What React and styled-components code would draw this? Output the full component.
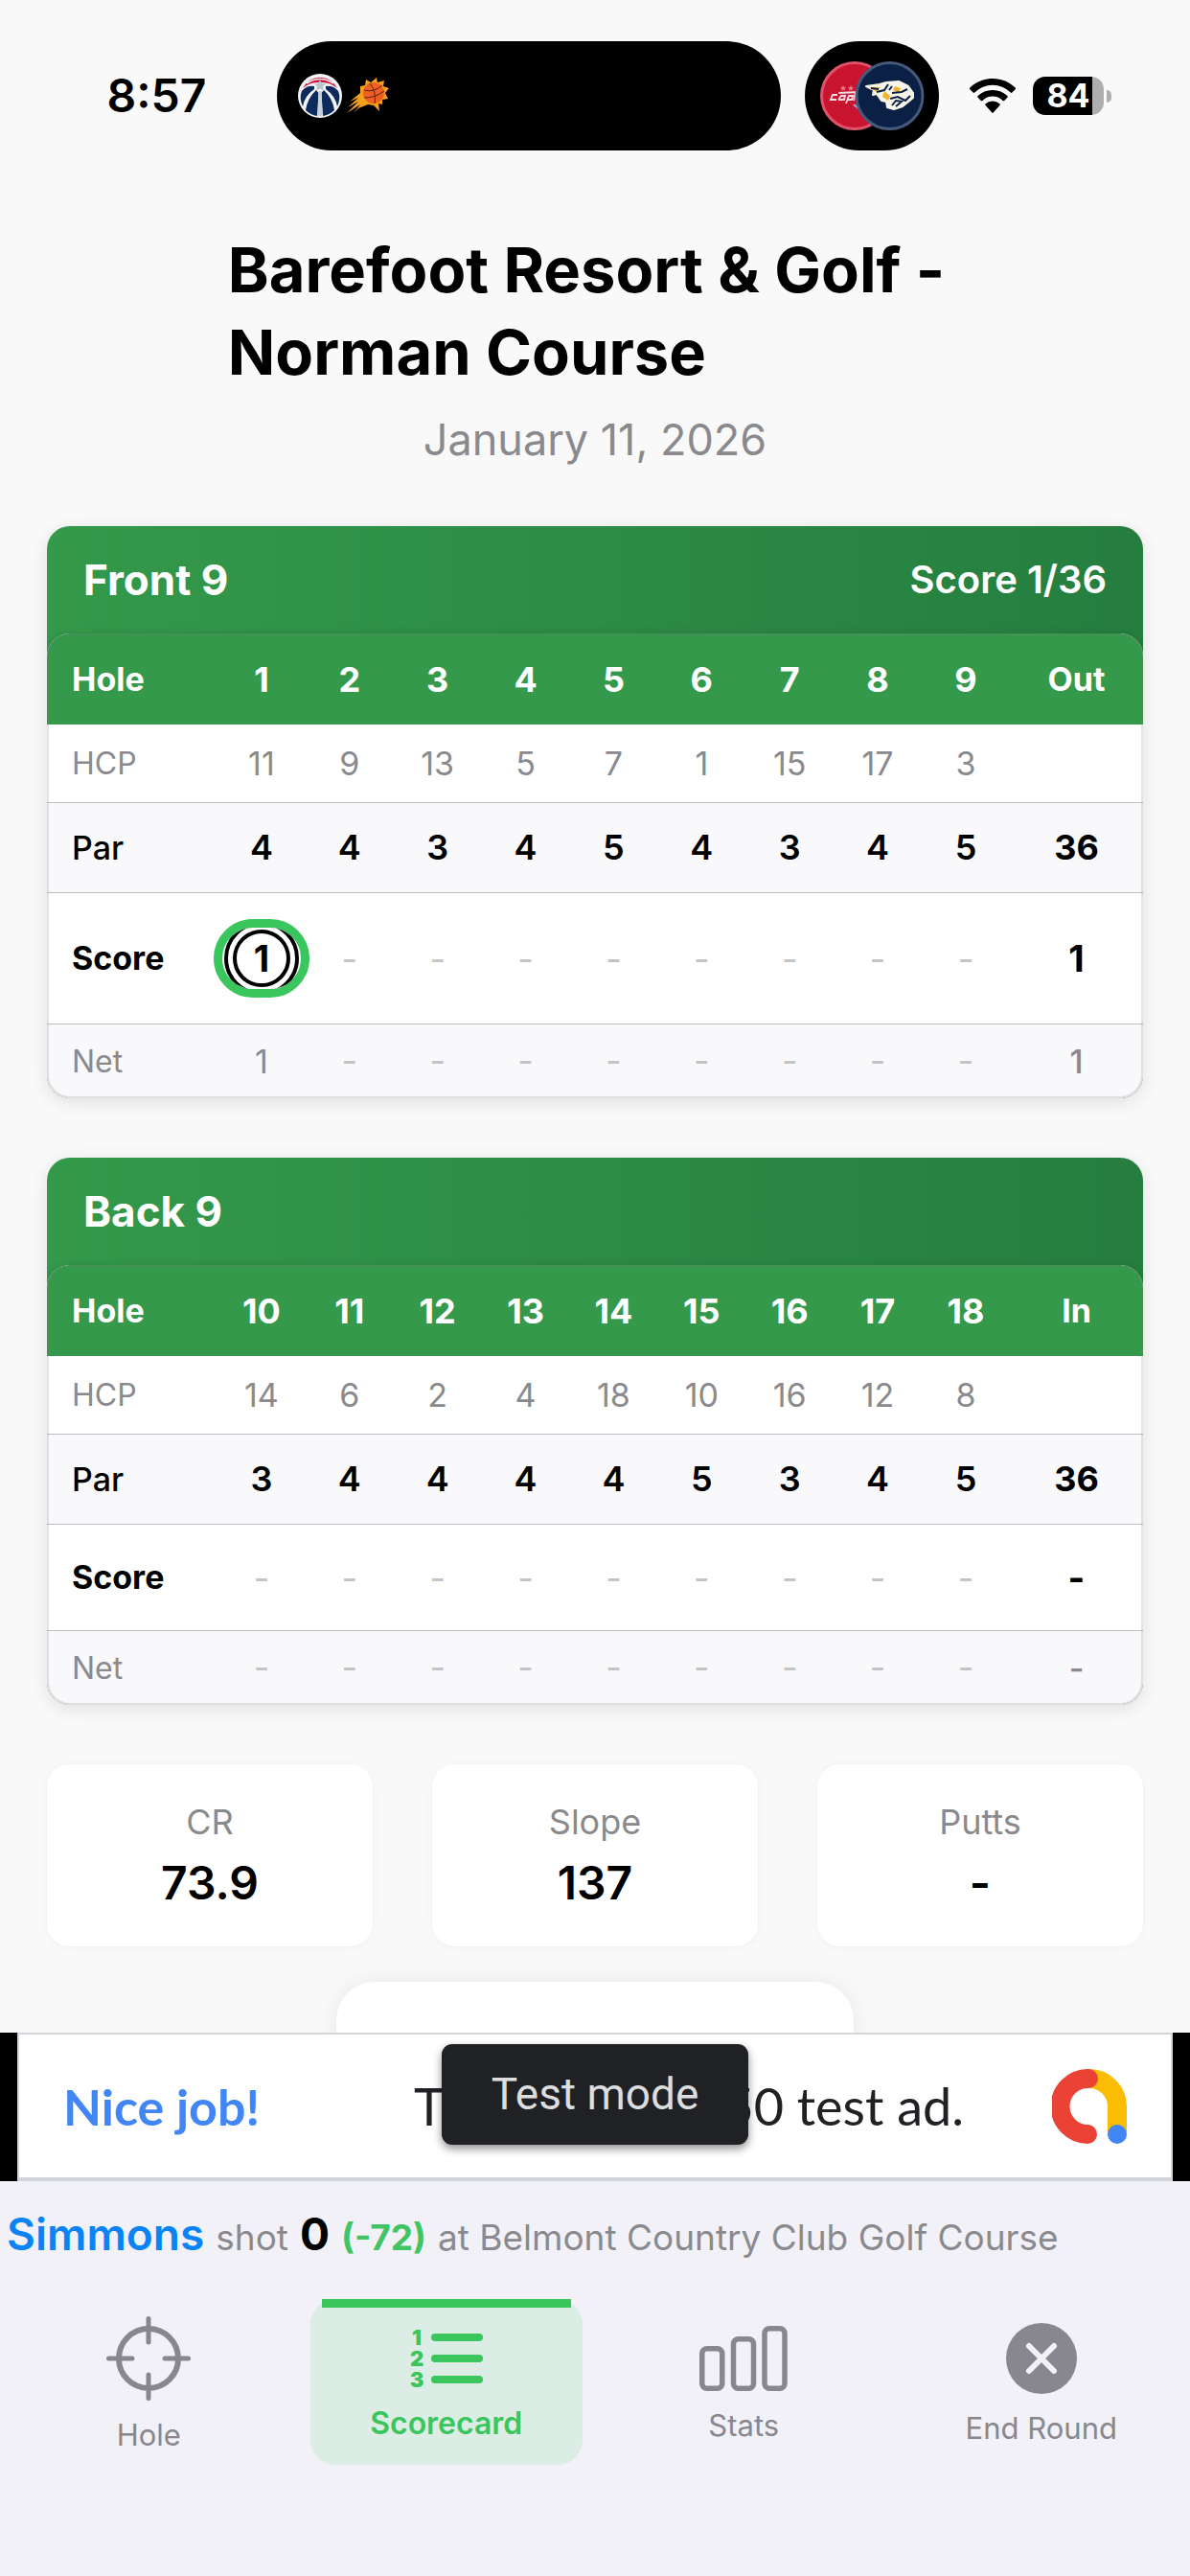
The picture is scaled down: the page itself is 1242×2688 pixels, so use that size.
import React from 'react';
import styled, { createGlobalStyle, css } from 'styled-components';

const GlobalStyle = createGlobalStyle`
  *, *::before, *::after { box-sizing: border-box; }
  body {
    margin: 0;
    background: #f9f9f9;
    color: #000;
    font-family: Inter, "Liberation Sans", sans-serif;
  }
  button { font: inherit; color: inherit; background: none; border: 0; padding: 0; margin: 0; cursor: pointer; }
`;

const Screen = styled.div`
  min-height: 100vh;
  display: flex;
  flex-direction: column;
`;

/* Status bar */
const StatusBar = styled.header`
  display: flex;
  align-items: center;
  height: 200px;
  padding-right: 82px;
`;

const Clock = styled.time`
  flex: 1;
  padding-left: 38px;
  text-align: center;
  font-size: 48px;
  line-height: 60px;
  font-weight: 600;
`;

const Island = styled.div`
  display: flex;
  align-items: center;
  gap: 5px;
  width: 526px;
  height: 114px;
  padding-left: 22px;
  border-radius: 57px;
  background: #000;
`;

const IslandBubble = styled.div`
  display: flex;
  align-items: center;
  justify-content: center;
  width: 140px;
  height: 114px;
  margin-left: 25px;
  border-radius: 57px;
  background: #000;
`;

const Signals = styled.div`
  display: flex;
  align-items: center;
  gap: 18px;
  margin-left: 32px;
`;

const Battery = styled.div`
  display: flex;
  align-items: center;
  gap: 3px;
`;

const BatteryBody = styled.div`
  width: 74px;
  height: 40px;
  border-radius: 13px;
  background: linear-gradient(to right, #000 84%, #aeaeae 84%);
  color: #fff;
  font-size: 34px;
  line-height: 40px;
  font-weight: 700;
  text-align: center;
`;

const BatteryNub = styled.div`
  width: 5px;
  height: 13px;
  border-radius: 0 6px 6px 0;
  background: #aeaeae;
`;

/* Scrolling content */
const Content = styled.main`
  flex: 1 0 0;
  height: 0;
  overflow: hidden;
  display: flex;
  flex-direction: column;
  padding: 39px 49px 0;
`;

const Heading = styled.div`
  display: flex;
  flex-direction: column;
  align-items: center;
  gap: 16px;
  margin-bottom: 58px;
`;

const Title = styled.h1`
  margin: 0;
  padding-right: 18px;
  font-size: 65px;
  line-height: 86px;
  font-weight: 700;
`;

const PlayedOn = styled.p`
  margin: 0;
  color: #8a8a8e;
  font-size: 45px;
  line-height: 64px;
`;

const Card = styled.section`
  flex: none;
  margin-bottom: 62px;
  border-radius: 24px;
  overflow: hidden;
  background: linear-gradient(to right, #34994b, #257e3f);
  box-shadow: 0 4px 18px rgba(0, 0, 0, 0.1);
`;

const CardHeader = styled.div`
  display: flex;
  align-items: center;
  justify-content: space-between;
  height: 112px;
  padding: 0 38px;
  color: #fff;
`;

const CardTitle = styled.h2`
  margin: 0;
  font-size: 44px;
  line-height: 52px;
  font-weight: 700;
`;

const CardScore = styled.span`
  font-size: 40px;
  line-height: 52px;
  font-weight: 600;
`;

const TableFrame = styled.div`
  position: relative;
  border-radius: 24px;
  overflow: hidden;
  background: #fff;
  box-shadow: 0 0 8px rgba(0, 0, 0, 0.12);

  &::after {
    content: '';
    position: absolute;
    inset: 0;
    border: 2px solid rgba(120, 120, 128, 0.2);
    border-radius: 24px;
    pointer-events: none;
  }
`;

const Table = styled.table`
  width: 100%;
  table-layout: fixed;
  border-collapse: collapse;
`;

const LabelCol = styled.col`
  width: 178px;
`;

const TotalCol = styled.col`
  width: 139px;
`;

const rows = {
  hole: css`
    height: 95px;
    background: #35994b;
    color: #fff;
    font-size: 36px;
    font-weight: 700;
    --label: 34px;
    --label-weight: 700;
    --total: 34px;
    --total-weight: 700;
  `,
  hcp: css`
    height: 81px;
    background: #fff;
    color: #8a8a8e;
    font-size: 34px;
    font-weight: 400;
    --label: 32px;
    --label-weight: 400;
  `,
  par: css`
    height: 94px;
    background: #f9f9fb;
    font-size: 36px;
    font-weight: 600;
    --label: 34px;
    --label-weight: 500;
    --total: 36px;
    --total-weight: 700;
  `,
  score: css`
    height: ${(p) => (p.$tall ? 137 : 111)}px;
    background: #fff;
    font-size: 38px;
    font-weight: 700;
    --label: 34px;
    --label-weight: 700;
    --total: 38px;
    --total-weight: 700;
  `,
  net: css`
    height: 78px;
    background: #f9f9fb;
    color: #8a8a8e;
    font-size: 34px;
    font-weight: 400;
    --label: 32px;
    --label-weight: 400;
    --total: 34px;
    --total-weight: 500;
  `,
};

const Row = styled.tr`
  ${(p) => rows[p.$kind]}
  & + & {
    border-top: 1px solid #bfbfc3;
  }
`;

const RowLabel = styled.th`
  padding: 0 0 0 26px;
  text-align: left;
  font-size: var(--label);
  font-weight: var(--label-weight);
`;

const Cell = styled.td`
  padding: 0;
  text-align: center;
  font-weight: inherit;
`;

const HeadCell = styled.th`
  padding: 0;
  text-align: center;
  font-weight: inherit;
`;

const TotalCell = styled.td`
  padding: 0;
  text-align: center;
  font-size: var(--total);
  font-weight: var(--total-weight);
`;

const Dash = styled.span`
  color: #c4c4c6;
  font-size: 36px;
  font-weight: 400;
`;

const ScoreSlot = styled.div`
  display: flex;
  justify-content: center;
`;

const ScorePill = styled.div`
  flex: none;
  display: flex;
  align-items: center;
  justify-content: center;
  width: 100px;
  height: 82px;
  border: 9px solid #39c65c;
  border-radius: 41px;
  overflow: hidden;
`;

const Ring = styled.div`
  flex: none;
  display: flex;
  align-items: center;
  justify-content: center;
  width: ${(p) => p.$size}px;
  height: ${(p) => p.$size}px;
  border: 4px solid #000;
  border-radius: 50%;
`;

const StatGrid = styled.dl`
  flex: none;
  display: grid;
  grid-template-columns: repeat(3, 1fr);
  gap: 62px;
  margin: 0 0 37px;
`;

const StatCard = styled.div`
  display: flex;
  flex-direction: column;
  align-items: center;
  gap: 10px;
  height: 190px;
  padding-top: 36px;
  border-radius: 24px;
  background: #fff;
  box-shadow: 0 1px 8px rgba(0, 0, 0, 0.04);
`;

const StatLabel = styled.dt`
  color: #8a8a8e;
  font-size: 36px;
  line-height: 48px;
`;

const StatValue = styled.dd`
  margin: 0;
  font-size: 48px;
  line-height: 60px;
  font-weight: 600;
`;

const Sheet = styled.div`
  flex: none;
  align-self: center;
  width: 540px;
  height: 180px;
  border-radius: 40px;
  background: #fff;
  box-shadow: 0 0 24px rgba(0, 0, 0, 0.07);
`;

/* Ad banner */
const AdBanner = styled.aside`
  position: relative;
  padding: 0 18px;
  background: #000;
`;

const AdBody = styled.div`
  display: flex;
  align-items: center;
  height: 155px;
  padding: 0 46px 0 46px;
  border: 2px solid #d2d5d9;
  border-bottom-width: 4px;
  background: #fff;
  font-family: Lato, "Open Sans", sans-serif;
  font-size: 54px;
  line-height: 64px;
`;

const AdPraise = styled.span`
  color: #4285f4;
  font-size: 52px;
  font-weight: 700;
`;

const AdCopy = styled.span`
  flex: 1;
  text-align: right;
  padding-right: 92px;
  color: #202124;
`;

const TestBadge = styled.div`
  position: absolute;
  top: 12px;
  left: 50%;
  transform: translateX(-50%);
  width: 320px;
  height: 105px;
  border-radius: 11px;
  background: #202124;
  box-shadow: 0 4px 10px rgba(0, 0, 0, 0.45);
  color: #dcdddf;
  font-family: Roboto, sans-serif;
  font-size: 46px;
  line-height: 105px;
  text-align: center;
`;

/* Bottom area */
const Footer = styled.footer`
  background: #f2f1f8;
  height: 412px;
`;

const Ticker = styled.p`
  display: flex;
  align-items: baseline;
  gap: 12px;
  margin: 0;
  height: 123px;
  padding: 27px 0 0 7px;
  overflow: hidden;
  white-space: nowrap;
  color: #8a8a8e;
  font-size: 37px;
  line-height: 56px;
`;

const Player = styled.a`
  color: #0a84f5;
  font-size: 46px;
  font-weight: 600;
  text-decoration: none;
`;

const Strokes = styled.strong`
  color: #000;
  font-size: 46px;
  font-weight: 700;
`;

const ToPar = styled.span`
  color: #41c463;
  font-weight: 700;
`;

const Tabs = styled.nav`
  display: grid;
  grid-template-columns: repeat(4, 1fr);
`;

const Tab = styled.button`
  && {
    display: flex;
    flex-direction: column;
    align-items: center;
    justify-content: center;
    gap: 18px;
    height: 173px;
    margin: 0 13px;
    padding-top: 4px;
    border-radius: 26px;
    color: ${(p) => (p.$active ? '#3ac55d' : '#88878d')};
    background: ${(p) => (p.$active ? '#dcede5' : 'none')};
    font-size: ${(p) => (p.$active ? 32 : 31)}px;
    line-height: 36px;
    font-weight: ${(p) => (p.$active ? 600 : 400)};
    position: relative;
  }
`;

const ActiveMark = styled.span`
  position: absolute;
  top: 0;
  left: 12px;
  right: 12px;
  height: 9px;
  background: #3ac55d;
`;

const WizardsLogo = () => (
  <svg width="46" height="46" viewBox="0 0 46 46" aria-hidden="true">
    <circle cx="23" cy="23" r="23" fill="#f1f3f6" />
    <path d="M5 15 A20 20 0 0 1 41 15 Q33 8 23 9 Q13 8 5 15Z" fill="#d2143a" />
    <path d="M9 10 Q23 1 37 10" fill="none" stroke="#f1f3f6" strokeWidth="1.5" />
    <path d="M17 16 Q7 23 5 34 Q1 25 4 18 Q9 12 17 13Z M29 16 Q39 23 41 34 Q45 25 42 18 Q37 12 29 13Z" fill="#0d2a5c" />
    <path d="M19 17 Q10 25 8 38 Q13 43 20 44 L21.500 20Z M27 17 Q36 25 38 38 Q33 43 26 44 L24.500 20Z" fill="#0d2a5c" />
    <path d="M23 6 l1.800 4 4.200 .4 -3.200 2.800 1 4.300 -3.800 -2.300 -3.800 2.300 1 -4.300 -3.200 -2.800 4.200 -.4z" fill="#b9c1ca" />
    <path d="M21.500 18 L20.500 44 H25.500 L24.500 18Z" fill="#c9d0d8" />
  </svg>
);

const SunsLogo = () => (
  <svg width="44" height="40" viewBox="0 0 44 40" aria-hidden="true">
    <path
      d="M14 10 L19 9 L20 3 L25 6 L31 1 L32 6 L39 4 L38 10 L44 12 L40 17 L43 23 L37 24 L37 29 L33 28 L34 36 L28 30 L22 29 L12 33 L18 27 L7 38 L14 29 L0 38 L12 26 L1 32 L12 22 L3 26 L14 17Z"
      fill="#f5a01c"
    />
    <circle cx="28" cy="17" r="11" fill="#ee5f20" />
    <path
      d="M18 14 Q28 17 37 9 M18 22 Q30 22 39 15 M24 7 Q31 15 29 28"
      fill="none"
      stroke="#5a2014"
      strokeWidth="1"
    />
  </svg>
);

const MatchLogos = () => (
  <svg width="110" height="74" viewBox="0 0 110 74" aria-hidden="true">
    <circle cx="37" cy="37" r="34.500" fill="#c9142f" stroke="#e0526a" strokeWidth="3" />
    <path d="M25 26 l1 2 2 .2 -1.500 1.500 .5 2 -2 -1.200 -2 1.200 .5 -2 -1.500 -1.500 2 -.2z M33 26 l1 2 2 .2 -1.500 1.500 .5 2 -2 -1.200 -2 1.200 .5 -2 -1.500 -1.500 2 -.2z" fill="#e9788a" />
    <path d="M19 36 H14 L12 41 H18 M20 41 L23 37 H27 L26 41 H20 M28 45 L31 37 H35 L34 41 H30 M38 33 L36 42 M20 34 L42 33" fill="none" stroke="#f3dfe3" strokeWidth="1.800" />
    <path d="M36 46 L42 51" stroke="#9fb3d6" strokeWidth="2" />
    <circle cx="73.500" cy="37" r="34.500" fill="#0a2145" stroke="#46597a" strokeWidth="3" />
    <path
      d="M49 27 L63 25 L70 23 L83 22 L93 27 L98 34 L98 39 L92 44 L87 48 L78 51 L71 49 L70 43 L65 42 L60 35 L56 36 L57 31Z"
      fill="#f7f4ea"
      stroke="#f7f4ea"
      strokeWidth="2"
      strokeLinejoin="round"
    />
    <path d="M52 28 L64 28 L60 33Z M66 38 L72 42 L74 37 L68 32Z M79 27 L85 29 L83 34 L77 31Z" fill="#f2b233" />
    <path
      d="M54 29 L62 30 M60 33 L68 31 L72 25 M73 31 L76 27 M76 34 L86 33 L92 30 M74 40 L82 38 L90 42 L95 37 M76 47 L80 42 L86 43 L80 48"
      fill="none"
      stroke="#0a2145"
      strokeWidth="2"
    />
  </svg>
);

const WifiIcon = () => (
  <svg width="48" height="36" viewBox="0 0 48 36" aria-label="Wi-Fi">
    <path d="M24 0 C14.500 0 6 3.800 .4 9.600 a1.200 1.200 0 0 0 0 1.700 L3.600 14.500 a1.200 1.200 0 0 0 1.700 0 A26.500 26.500 0 0 1 42.700 14.500 a1.200 1.200 0 0 0 1.700 0 L47.600 11.300 a1.200 1.200 0 0 0 0 -1.700 C42 3.800 33.500 0 24 0Z" />
    <path d="M24 12 A22 22 0 0 0 8.600 18 a1.200 1.200 0 0 0 0 1.700 L11.800 22.900 a1.200 1.200 0 0 0 1.700 0 A15 15 0 0 1 34.500 22.900 a1.200 1.200 0 0 0 1.700 0 L39.400 19.700 a1.200 1.200 0 0 0 0 -1.700 A22 22 0 0 0 24 12Z" />
    <path d="M24 23.500 A11 11 0 0 0 16.600 26.300 a1.200 1.200 0 0 0 0 1.700 L23.100 35.300 a1.200 1.200 0 0 0 1.800 0 L31.400 28 a1.200 1.200 0 0 0 0 -1.700 A11 11 0 0 0 24 23.500Z" />
  </svg>
);

const AdMobLogo = () => (
  <svg width="78" height="78" viewBox="0 0 78 78" aria-hidden="true">
    <path d="M39 10 A29 29 0 0 1 68 39 V66" fill="none" stroke="#fbbc04" strokeWidth="20" />
    <path d="M38 10 A29 29 0 0 0 37 68" fill="none" stroke="#ea4335" strokeWidth="20" strokeLinecap="round" />
    <circle cx="68" cy="68" r="10" fill="#4285f4" />
  </svg>
);

const TargetIcon = () => (
  <svg width="88" height="88" viewBox="0 0 88 88" fill="none" stroke="currentColor" aria-hidden="true">
    <circle cx="44" cy="44" r="31" strokeWidth="6" />
    <path d="M44 2.500V27 M44 61V85.500 M2.500 44H27 M61 44H85.500" strokeWidth="5" strokeLinecap="round" />
  </svg>
);

const ListSvg = styled.svg`
  overflow: visible;
`;

const Digit = styled.text`
  font-size: 22px;
  font-weight: 900;
  fill: currentColor;
`;

const ListIcon = () => (
  <ListSvg width="78" height="64" viewBox="0 0 78 64" aria-hidden="true">
    {[1, 2, 3].map((n, i) => (
      <g key={n}>
        <Digit x="8" y={18 + i * 22} textAnchor="middle">{n}</Digit>
        <rect x="23" y={6 + i * 22} width="54" height="8" rx="4" fill="currentColor" />
      </g>
    ))}
  </ListSvg>
);

const BarsIcon = () => (
  <svg width="92" height="68" viewBox="0 0 92 68" fill="none" stroke="currentColor" strokeWidth="5.500" aria-hidden="true">
    <rect x="2.750" y="23.750" width="21" height="41.500" rx="5" />
    <rect x="35.500" y="13.750" width="21" height="51.500" rx="5" />
    <rect x="68" y="2.750" width="21" height="62.500" rx="5" />
  </svg>
);

const CloseIcon = () => (
  <svg width="74" height="74" viewBox="0 0 74 74" aria-hidden="true">
    <circle cx="37" cy="37" r="37" fill="currentColor" />
    <path d="M24 24 L50 50 M50 24 L24 50" stroke="#f2f1f8" strokeWidth="6" strokeLinecap="round" />
  </svg>
);

const nines = [
  {
    title: 'Front 9',
    summary: 'Score 1/36',
    totalLabel: 'Out',
    holes: [1, 2, 3, 4, 5, 6, 7, 8, 9],
    hcp: [11, 9, 13, 5, 7, 1, 15, 17, 3],
    par: [4, 4, 3, 4, 5, 4, 3, 4, 5],
    score: [1],
    net: [1],
    totals: { par: 36, score: 1, net: 1 },
  },
  {
    title: 'Back 9',
    totalLabel: 'In',
    holes: [10, 11, 12, 13, 14, 15, 16, 17, 18],
    hcp: [14, 6, 2, 4, 18, 10, 16, 12, 8],
    par: [3, 4, 4, 4, 4, 5, 3, 4, 5],
    score: [],
    net: [],
    totals: { par: 36, score: '-', net: '-' },
  },
];

const MarkedScore = ({ value }) => (
  <ScoreSlot>
    <ScorePill>
      <Ring $size={78}>
        <Ring $size={60}>{value}</Ring>
      </Ring>
    </ScorePill>
  </ScoreSlot>
);

const ScoreTable = ({ nine }) => (
  <Card>
    <CardHeader>
      <CardTitle>{nine.title}</CardTitle>
      {nine.summary && <CardScore>{nine.summary}</CardScore>}
    </CardHeader>
    <TableFrame>
      <Table>
        <colgroup>
          <LabelCol />
          <col span="9" />
          <TotalCol />
        </colgroup>
        <thead>
          <Row $kind="hole">
            <RowLabel scope="col">Hole</RowLabel>
            {nine.holes.map((n) => <HeadCell scope="col" key={n}>{n}</HeadCell>)}
            <TotalCell as="th" scope="col">{nine.totalLabel}</TotalCell>
          </Row>
        </thead>
        <tbody>
          <Row $kind="hcp">
            <RowLabel scope="row">HCP</RowLabel>
            {nine.hcp.map((v, i) => <Cell key={i}>{v}</Cell>)}
            <TotalCell />
          </Row>
          <Row $kind="par">
            <RowLabel scope="row">Par</RowLabel>
            {nine.par.map((v, i) => <Cell key={i}>{v}</Cell>)}
            <TotalCell>{nine.totals.par}</TotalCell>
          </Row>
          <Row $kind="score" $tall={nine.score.length > 0}>
            <RowLabel scope="row">Score</RowLabel>
            {nine.holes.map((n, i) => (
              <Cell key={n}>{nine.score[i] ? <MarkedScore value={nine.score[i]} /> : <Dash>-</Dash>}</Cell>
            ))}
            <TotalCell>{nine.totals.score}</TotalCell>
          </Row>
          <Row $kind="net">
            <RowLabel scope="row">Net</RowLabel>
            {nine.holes.map((n, i) => <Cell key={n}>{nine.net[i] || <Dash>-</Dash>}</Cell>)}
            <TotalCell>{nine.totals.net}</TotalCell>
          </Row>
        </tbody>
      </Table>
    </TableFrame>
  </Card>
);

const stats = [['CR', '73.9'], ['Slope', '137'], ['Putts', '-']];

const tabs = [
  { label: 'Hole', Icon: TargetIcon },
  { label: 'Scorecard', Icon: ListIcon, active: true },
  { label: 'Stats', Icon: BarsIcon },
  { label: 'End Round', Icon: CloseIcon },
];

export default function App() {
  return (
    <Screen>
      <GlobalStyle />
      <StatusBar>
        <Clock>8:57</Clock>
        <Island>
          <WizardsLogo />
          <SunsLogo />
        </Island>
        <IslandBubble>
          <MatchLogos />
        </IslandBubble>
        <Signals>
          <WifiIcon />
          <Battery>
            <BatteryBody>84</BatteryBody>
            <BatteryNub />
          </Battery>
        </Signals>
      </StatusBar>

      <Content>
        <Heading>
          <Title>Barefoot Resort &amp; Golf -<br />Norman Course</Title>
          <PlayedOn>January 11, 2026</PlayedOn>
        </Heading>
        {nines.map((nine) => <ScoreTable key={nine.title} nine={nine} />)}
        <StatGrid>
          {stats.map(([label, value]) => (
            <StatCard key={label}>
              <StatLabel>{label}</StatLabel>
              <StatValue>{value}</StatValue>
            </StatCard>
          ))}
        </StatGrid>
        <Sheet />
      </Content>

      <AdBanner>
        <AdBody>
          <AdPraise>Nice job!</AdPraise>
          <AdCopy>This is a 320x50 test ad.</AdCopy>
          <AdMobLogo />
        </AdBody>
        <TestBadge>Test mode</TestBadge>
      </AdBanner>

      <Footer>
        <Ticker>
          <Player href="#player">Simmons</Player>
          <span>shot</span>
          <Strokes>0</Strokes>
          <ToPar>(-72)</ToPar>
          <span>at Belmont Country Club Golf Course</span>
        </Ticker>
        <Tabs>
          {tabs.map(({ label, Icon, active }) => (
            <Tab key={label} type="button" $active={active} aria-current={active ? 'page' : undefined}>
              {active && <ActiveMark />}
              <Icon />
              {label}
            </Tab>
          ))}
        </Tabs>
      </Footer>
    </Screen>
  );
}
